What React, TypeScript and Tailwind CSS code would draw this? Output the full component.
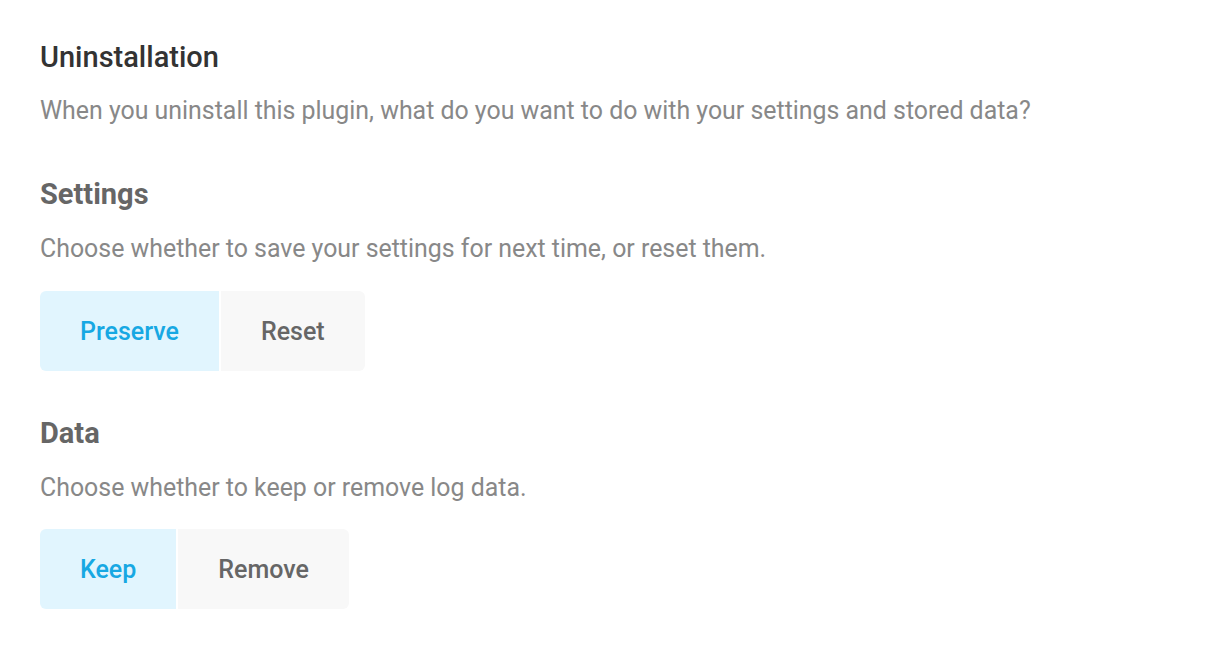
import React from "react";

function Toggle({ options }: { options: { label: string; active?: boolean }[] }) {
  return (
    <div className="flex gap-[2px]">
      {options.map((o, i) => (
        <button
          key={o.label}
          className={
            "h-20 px-10 text-[25px] font-medium leading-none " +
            (o.active ? "bg-[#e1f5fe] text-[#17a8e3] " : "bg-[#f8f8f8] text-[#666666] ") +
            (i === 0 ? "rounded-l-md " : "") +
            (i === options.length - 1 ? "rounded-r-md" : "")
          }
        >
          {o.label}
        </button>
      ))}
    </div>
  );
}

export default function App() {
  return (
    <div className="bg-white min-h-[655px] w-[1220px] px-10 pt-[37px]" style={{ fontFamily: "Roboto, sans-serif" }}>
      <h2 className="text-[29px] font-medium leading-[40px] text-[#333333]">Uninstallation</h2>
      <p className="mt-[19px] text-[24.9px] leading-[30px] text-[#888888]">
        When you uninstall this plugin, what do you want to do with your settings and stored data?
      </p>
      <h3 className="mt-[48px] text-[29px] font-bold leading-[40px] text-[#666666]">Settings</h3>
      <p className="mt-[20px] text-[24.9px] leading-[30px] text-[#888888]">
        Choose whether to save your settings for next time, or reset them.
      </p>
      <div className="mt-[27px]">
        <Toggle options={[{ label: "Preserve", active: true }, { label: "Reset" }]} />
      </div>
      <h3 className="mt-[42px] text-[29px] font-bold leading-[40px] text-[#666666]">Data</h3>
      <p className="mt-[20px] text-[24.9px] leading-[30px] text-[#888888]">Choose whether to keep or remove log data.</p>
      <div className="mt-[26px]">
        <Toggle options={[{ label: "Keep", active: true }, { label: "Remove" }]} />
      </div>
    </div>
  );
}
